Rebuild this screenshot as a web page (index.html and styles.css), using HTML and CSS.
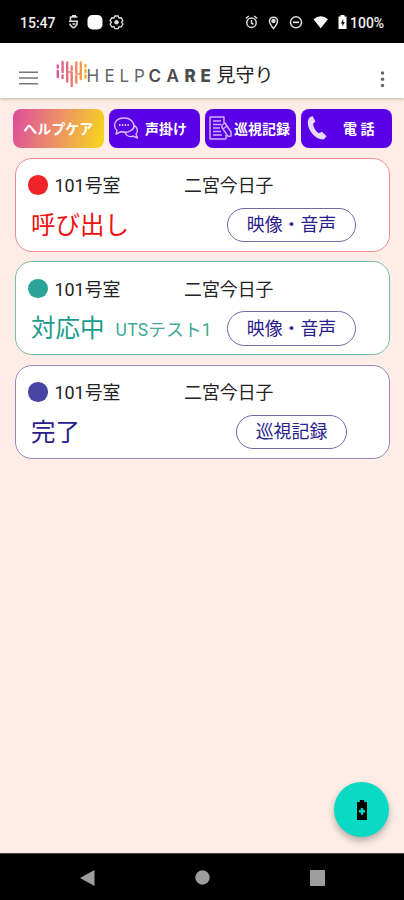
FILE: index.html
```html
<!DOCTYPE html>
<html lang="ja">
<head>
<meta charset="utf-8">
<title>HELPCARE 見守り</title>
<link rel="stylesheet" href="styles.css">
</head>
<body>
<div class="screen">
  <div class="status-bar">
    <span class="clock">15:47</span>
    <svg class="status-left" width="60" height="20" viewBox="0 0 60 20" fill="none" stroke="#ddd" stroke-width="1.5">
      <path d="M9.500 5H2.500v4M1 9.200h9M9 9.200v3.300L6.500 15.500h-2L2 12.500v-1M4 3.800h4M4.500 12h3"/>
      <rect x="19.500" y="3" width="15" height="14.500" rx="5" fill="#fff" stroke="none"/>
      <path d="M46.800 4h3.400l.8 2 2.200-.2 1.700 2.800-1.400 1.700 1.400 1.700-1.700 2.800-2.200-.2-.8 2h-3.400l-.8-2-2.200.2-1.700-2.800 1.400-1.700-1.400-1.700 1.700-2.800 2.200.2z" stroke-width="1.300"/>
      <circle cx="48.500" cy="10.300" r="2.200" fill="#ddd" stroke="none"/>
    </svg>
    <svg class="status-right" width="104" height="20" viewBox="0 0 104 20" fill="none" stroke="#ddd" stroke-width="1.500">
      <circle cx="6.500" cy="10.700" r="4.700"/>
      <path d="M6.500 8v3l2 1.300M.8 6.500l3-2.500M12.200 6.500l-3-2.500"/>
      <path d="M28.500 16.500c-2.500-3-4-5-4-7.300a4 4 0 0 1 8 0c0 2.300-1.500 4.300-4 7.300z"/>
      <circle cx="28.500" cy="9" r="1.500" fill="#ddd"/>
      <circle cx="51" cy="10.300" r="5.500"/>
      <path d="M48 10.300h6" stroke-width="1.800"/>
      <path d="M68.500 7.200Q75.700 1.200 83 7.200L75.700 16.300z" fill="#fff" stroke="none"/>
      <path fill-rule="evenodd" d="M93.500 4.500H95.500V3h4v1.500h2v12.500h-8zM98.200 7l-2.300 4.400h1.500v3l2.400-4.400h-1.600z" fill="#fff" stroke="none"/>
    </svg>
    <span class="battery">100%</span>
  </div>

  <header class="app-bar">
    <svg class="menu" width="19" height="14" viewBox="0 0 19 14" stroke="#777" stroke-width="1.600"><path d="M0 1.200h19M0 7h19M0 12.800h19"/></svg>
    <svg class="logo" width="156" height="30" viewBox="0 0 156 30">
      <defs>
        <linearGradient id="heart" gradientUnits="userSpaceOnUse" x1="0" y1="0" x2="32" y2="0">
          <stop offset="0" stop-color="#d6519a"/><stop offset=".5" stop-color="#ef7b72"/><stop offset="1" stop-color="#f2b32c"/>
        </linearGradient>
      </defs>
      <g stroke="url(#heart)" stroke-width="2.400" stroke-linecap="round" fill="none">
        <path d="M1.800 7.500v2M1.800 13v6M6.600 4v10M6.600 17.500v2.500M11.200 4.500v19M15.700 8.500v3.500M15.700 15v13M20.300 4.500v10M20.300 18v6.500M24.800 4.500v16.500M29.500 7v1.500M29.500 12v2M29.500 17.500v2"/>
        <path d="M11.200 14h4.500M20.300 16h5" stroke-width="1.700"/>
      </g>
      <g class="wordmark">
        <text x="30.500 48.500 63.500 78" y="24">HEL<tspan class="mid">P</tspan></text>
        <text class="strong" x="92.500 110.500 128.500 144.500" y="24"><tspan class="mid">CA</tspan>RE</text>
      </g>
    </svg>
    <h1 class="title">見守り</h1>
    <svg class="more" width="5" height="17" viewBox="0 0 5 17" fill="#666"><circle cx="2.500" cy="2" r="1.700"/><circle cx="2.500" cy="8.200" r="1.700"/><circle cx="2.500" cy="14.500" r="1.700"/></svg>
  </header>

  <main class="content">
    <nav class="actions">
      <button class="action brand"><span>ヘルプケア</span></button>
      <button class="action talk">
        <svg width="26" height="24" viewBox="0 0 26 24" fill="none" stroke="#d5bfff" stroke-width="1.400" stroke-linejoin="round">
          <path d="M4 14.500C-1 10 2 2 11 2s13 9 7 12.500c-3 2-7 2-9.500 1L3 18z"/>
          <path d="M20.500 9.500c4 1 5 6 2.500 8.500l1.500 4-4-1.800c-4 1-7.500-.7-8.500-4"/>
          <path d="M6 9h10" stroke-width="2" stroke-dasharray="1.500 1.300"/>
        </svg>
        <span>声掛け</span>
      </button>
      <button class="action record">
        <svg width="24" height="26" viewBox="0 0 24 26" fill="none" stroke="#cbb1ff" stroke-width="1.500" stroke-linejoin="round">
          <path d="M15 8V2H1v22h16v-4M4 6h8M4 9.500h8M4 13h7M4 16.500h8M4 20h9"/>
          <path d="M13 10l3-2 6 9v4l-3 .5-6-9zM14 14l4-3"/>
        </svg>
        <span>巡視記録</span>
      </button>
      <button class="action phone">
        <svg width="20" height="25" viewBox="0 0 20 25" fill="#ead9ff"><path d="M2.500 1.500L5.500 0l3 5.500-2.500 2.300c.5 4 2.500 7.300 5.800 9.500l3.200-1.500 4.500 4.500-2.500 3C8 25-3.500 10 2.500 1.500z"/></svg>
        <span>電 話</span>
      </button>
    </nav>

    <section class="card calling">
      <div class="who"><i class="dot"></i><span class="room">101号室</span><span class="name">二宮今日子</span></div>
      <div class="state-row"><strong class="state">呼び出し</strong><button class="pill">映像・音声</button></div>
    </section>
    <section class="card handling">
      <div class="who"><i class="dot"></i><span class="room">101号室</span><span class="name">二宮今日子</span></div>
      <div class="state-row"><strong class="state">対応中</strong><span class="staff">UTSテスト1</span><button class="pill">映像・音声</button></div>
    </section>
    <section class="card done">
      <div class="who"><i class="dot"></i><span class="room">101号室</span><span class="name">二宮今日子</span></div>
      <div class="state-row"><strong class="state">完了</strong><button class="pill">巡視記録</button></div>
    </section>
  </main>

  <button class="fab" aria-label="battery">
    <svg width="10" height="20" viewBox="0 0 10 20"><path fill-rule="evenodd" d="M0 2h2.800V0h4.400v2H10v18H0zM3.800 8v2H2v2.600h1.800v2.200h2.400v-2.200H8V10H6.200V8z"/></svg>
  </button>

  <footer class="nav-bar">
    <svg width="15" height="16" viewBox="0 0 15 16"><path d="M0 8L14.500 0v16z"/></svg>
    <svg width="15" height="15" viewBox="0 0 15 15"><circle cx="7.500" cy="7.500" r="7.200"/></svg>
    <svg width="15" height="16" viewBox="0 0 15 16"><rect width="15" height="16" rx=".5"/></svg>
  </footer>
</div>
</body>
</html>
```
FILE: styles.css
```css
* { box-sizing: border-box; }
body { margin: 0; font-family: Roboto, "Noto Sans CJK JP", sans-serif; }
button { font: inherit; padding: 0; border: 0; }
svg { display: block; flex: none; }

.screen {
  position: relative;
  display: flex;
  flex-direction: column;
  width: 404px;
  height: 900px;
  overflow: hidden;
  background: #fdede6;
}

.status-bar {
  display: flex;
  align-items: center;
  flex: none;
  height: 43px;
  padding: 1px 18px 0 20px;
  background: #000;
  color: #f2f2f2;
  font-size: 14px;
  font-weight: 500;
}
.clock { width: 48px; padding-top: 1px; }
.status-right { margin-left: auto; }
.battery { width: 36px; margin-left: 1px; padding-top: 1px; }

.app-bar {
  display: flex;
  align-items: center;
  flex: none;
  height: 55px;
  padding: 0 19px 0 18.500px;
  background: #fff;
  box-shadow: 0 1px 3px rgba(0, 0, 0, .25);
  z-index: 1;
}
.menu { margin-top: 15px; }
.logo { margin: 5px 0 0 18px; }
.wordmark { font: 400 17px Inter, sans-serif; fill: #666; }
.wordmark .strong { font-weight: 800; fill: #4a4a4a; }
.wordmark .mid { font-weight: 600; }
.wordmark text:first-child .mid { font-weight: 400; }
.title { margin: 10px 0 0 5px; font-size: 19px; font-weight: 400; line-height: 26px; color: #222; }
.more { margin: 17px 0 0 auto; }

.content { flex: 1; padding: 10.500px 12px 0 13px; }

.actions { display: grid; grid-template-columns: repeat(4, 90.500px); gap: 5.500px; }
.action {
  display: flex;
  align-items: center;
  justify-content: center;
  height: 39.500px;
  border-radius: 8px;
  background: #5a00e6;
  color: #fff;
  font-size: 14px;
  font-weight: 700;
  white-space: nowrap;
}
.brand { background: linear-gradient(105deg, #e05298 5%, #ed9265 50%, #f6d321 95%); }
.talk { justify-content: flex-start; gap: 6px; padding-left: 4px; }
.record { justify-content: flex-start; gap: 1px; padding-left: 4px; }
.phone { justify-content: flex-start; gap: 16px; padding-left: 6px; }

.card {
  height: 94px;
  margin: 9.500px 2px 0 2px;
  padding: 16px 0 0 12px;
  border: 1px solid;
  border-radius: 17px;
  background: #fff;
}
.calling { border-color: #f08c91; color: #ee1111; }
.handling { border-color: #7dbca9; color: #199c8b; }
.done { border-color: #9589ba; color: #28218d; }

.who { display: flex; align-items: center; height: 21px; color: #222; font-size: 17.900px; }
.who span { margin-top: -2px; }
.dot { width: 19.500px; height: 19.500px; border-radius: 50%; }
.calling .dot { background: #f02328; }
.handling .dot { background: #2ca398; }
.done .dot { background: #4944a2; }
.room { width: 129.500px; margin-left: 7px; }

.state-row { display: flex; align-items: center; height: 35px; margin-top: 12px; padding: 0 33px 0 3px; }
.state { font-size: 24.500px; font-weight: 400; line-height: 35px; }
.staff { margin-left: 11px; font-size: 17.500px; color: #41aa94; letter-spacing: .3px; }
.pill {
  width: 129px;
  height: 34.500px;
  margin-left: auto;
  border: 1px solid #716ba8;
  border-radius: 18px;
  background: #fff;
  color: #28218d;
  font-size: 17.900px;
  line-height: 30px;
}
.done .pill { width: 111px; margin-right: 9px; }

.fab {
  position: absolute;
  left: 334px;
  top: 782px;
  display: flex;
  align-items: center;
  justify-content: center;
  width: 55px;
  height: 55px;
  border-radius: 50%;
  background: #07d9c4;
  box-shadow: 0 4px 7px rgba(0, 0, 0, .28);
}

.nav-bar {
  display: flex;
  align-items: center;
  justify-content: space-between;
  flex: none;
  height: 47px;
  padding: 1px 79.500px 0;
  border-top: 1px solid #444;
  background: #000;
  fill: #9d9d9d;
}
```
